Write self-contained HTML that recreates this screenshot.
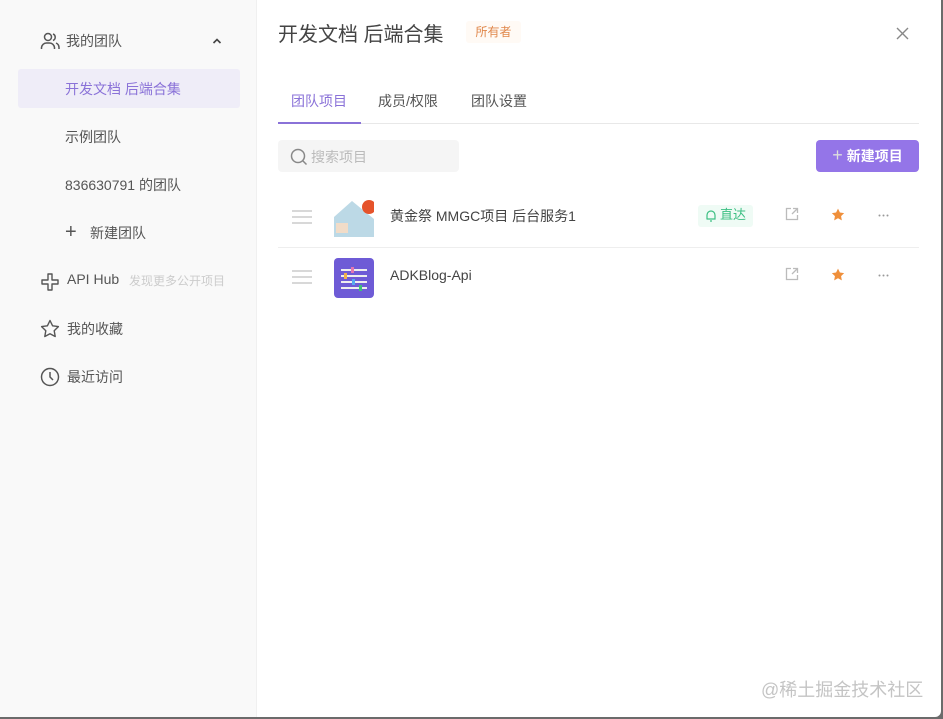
<!DOCTYPE html>
<html><head><meta charset="utf-8"><style>
*{margin:0;padding:0;box-sizing:border-box}
body{width:943px;height:719px;overflow:hidden;background:#6b6b6b;font-family:"Liberation Sans","Noto Sans CJK SC",sans-serif;position:relative}
.win{position:absolute;left:0;top:0;width:941px;height:717px;background:#fff;border-radius:0 0 6px 0;overflow:hidden}
.side{position:absolute;left:0;top:0;width:257px;height:717px;background:#f9f9f9;border-right:1px solid #f0f0f0}
.it{position:absolute;font-size:14px;color:#555;white-space:nowrap}
.sel{position:absolute;left:18px;top:69px;width:222px;height:39px;background:#efedf8;border-radius:3px}
svg{position:absolute}
</style></head><body><div class="win">
<div class="side">
<svg style="left:40px;top:32px" width="20" height="18" viewBox="0 0 20 18" fill="none" stroke="#555" stroke-width="1.5"><circle cx="8" cy="5" r="3.5"/><path d="M1.5 17v-1.5a5 5 0 0 1 5-4.5h3a5 5 0 0 1 5 4.5V17"/><path d="M13 2a3.5 3.5 0 0 1 0 6.5M16 11a5 5 0 0 1 3 4.5V17"/></svg>
<div class="it" style="left:66px;top:31px">我的团队</div>
<svg style="left:212px;top:37px" width="10" height="8" viewBox="0 0 10 8" fill="none" stroke="#444" stroke-width="1.6"><path d="M1.5 6l3.5-3.5 3.5 3.5"/></svg>
<div class="sel"></div>
<div class="it" style="left:65px;top:79px;color:#8a72d8">开发文档 后端合集</div>
<div class="it" style="left:65px;top:127px">示例团队</div>
<div class="it" style="left:65px;top:175px">836630791 的团队</div>
<div class="it" style="left:65px;top:221px;font-size:20px;font-weight:300">+</div>
<div class="it" style="left:90px;top:223px">新建团队</div>
<svg style="left:40px;top:272px" width="20" height="20" viewBox="0 0 20 20" fill="none" stroke="#555" stroke-width="1.4"><path d="M8 2h4v6h6v4h-6v6H8v-6H2V8h6z" stroke-linejoin="round"/></svg>
<div class="it" style="left:67px;top:271px">API Hub</div>
<div class="it" style="left:129px;top:272px;font-size:12px;color:#ccc">发现更多公开项目</div>
<svg style="left:40px;top:319px" width="20" height="19" viewBox="0 0 20 19" fill="none" stroke="#555" stroke-width="1.4"><path d="M10 1.5l2.6 5.3 5.8.8-4.2 4.1 1 5.8L10 14.8l-5.2 2.7 1-5.8L1.6 7.6l5.8-.8z" stroke-linejoin="round"/></svg>
<div class="it" style="left:67px;top:319px">我的收藏</div>
<svg style="left:40px;top:367px" width="20" height="20" viewBox="0 0 20 20" fill="none" stroke="#555" stroke-width="1.5"><circle cx="10" cy="10" r="8.5"/><path d="M10 5v5l3 3"/></svg>
<div class="it" style="left:67px;top:367px">最近访问</div>
</div>
<div class="it" style="left:278px;top:18px;font-size:20px;color:#444">开发文档 后端合集</div>
<div style="position:absolute;left:466px;top:21px;width:55px;height:22px;background:#fffaf5;border-radius:3px;font-size:12px;color:#e0874a;text-align:center;line-height:22px">所有者</div>
<svg style="left:896px;top:27px" width="13" height="13" viewBox="0 0 13 13" stroke="#888" stroke-width="1.4"><path d="M1 1l11 11M12 1L1 12"/></svg>
<div class="it" style="left:291px;top:91px;color:#8a72d8">团队项目</div>
<div class="it" style="left:378px;top:91px">成员/权限</div>
<div class="it" style="left:471px;top:91px">团队设置</div>
<div style="position:absolute;left:278px;top:123px;width:641px;height:1px;background:#e8e8e8"></div>
<div style="position:absolute;left:278px;top:122px;width:83px;height:2px;background:#8a72d8"></div>
<div style="position:absolute;left:278px;top:140px;width:181px;height:32px;background:#f5f5f5;border-radius:4px"></div>
<svg style="left:290px;top:148px" width="18" height="18" viewBox="0 0 18 18" fill="none" stroke="#888" stroke-width="1.5"><circle cx="8" cy="8" r="6.5"/><path d="M12.5 12.5l4 4"/></svg>
<div class="it" style="left:311px;top:147px;color:#bbb">搜索项目</div>
<div style="position:absolute;left:816px;top:140px;width:103px;height:32px;background:#9475e8;border-radius:4px;color:#fff;font-size:14px;font-weight:bold;line-height:30px;text-align:center"><span style="font-weight:300;font-size:18px;color:#ddd">+</span> 新建项目</div>
<div style="position:absolute;left:278px;top:247px;width:641px;height:1px;background:#eee"></div>
<svg style="left:292px;top:210px" width="20" height="14" stroke="#ccc" stroke-width="1.5"><path d="M0 1h20M0 7h20M0 13h20"/></svg>
<svg style="left:292px;top:270px" width="20" height="14" stroke="#ccc" stroke-width="1.5"><path d="M0 1h20M0 7h20M0 13h20"/></svg>
<svg style="left:334px;top:197px" width="40" height="40" viewBox="0 0 40 40"><path d="M0 20L18 4l22 18v18H0z" fill="#bcd9e6"/><circle cx="35" cy="10" r="7" fill="#e5532b"/><path d="M2 26h12v10H2z" fill="#f1dcc8"/></svg>
<svg style="left:334px;top:258px" width="40" height="40" viewBox="0 0 40 40"><rect width="40" height="40" rx="4" fill="#6e5bd6"/><g stroke="#eee" stroke-width="2"><path d="M7 12h26M7 18h26M7 24h26M7 30h26"/></g><rect x="17" y="9" width="3" height="6" fill="#e377b0"/><rect x="10" y="15" width="3" height="6" fill="#f0b24a"/><rect x="18" y="21" width="3" height="6" fill="#55aaf0"/><rect x="25" y="27" width="3" height="6" fill="#3cc07a"/></svg>
<div class="it" style="left:390px;top:206px;color:#444">黄金祭 MMGC项目 后台服务1</div>
<div class="it" style="left:390px;top:267px;color:#444">ADKBlog-Api</div>
<div style="position:absolute;left:698px;top:205px;width:55px;height:22px;background:#effbf5;border-radius:3px;color:#3cbf83;font-size:13px;line-height:20px;padding-left:22px">直达</div>
<svg style="left:705px;top:209px" width="12" height="14" viewBox="0 0 12 14" fill="none" stroke="#3cbf83" stroke-width="1.2"><path d="M2 10V6a4 4 0 0 1 8 0v4H1.5h9M5 12h2"/></svg>
<svg style="left:785px;top:207px" width="14" height="14" viewBox="0 0 14 14" fill="none" stroke="#bbb" stroke-width="1.3"><path d="M6 1.5H1.5v11h11V8M8 1.5h4.5V6M12.5 1.5L7 7"/></svg>
<svg style="left:785px;top:267px" width="14" height="14" viewBox="0 0 14 14" fill="none" stroke="#bbb" stroke-width="1.3"><path d="M6 1.5H1.5v11h11V8M8 1.5h4.5V6M12.5 1.5L7 7"/></svg>
<svg style="left:831px;top:208px" width="14" height="13" viewBox="0 0 20 19"><path d="M10 1l2.8 5.6 6.2.9-4.5 4.3 1.1 6.2L10 15l-5.6 3 1.1-6.2L1 7.5l6.2-.9z" fill="#ef8f3a"/></svg>
<svg style="left:831px;top:268px" width="14" height="13" viewBox="0 0 20 19"><path d="M10 1l2.8 5.6 6.2.9-4.5 4.3 1.1 6.2L10 15l-5.6 3 1.1-6.2L1 7.5l6.2-.9z" fill="#ef8f3a"/></svg>
<svg style="left:878px;top:214px" width="11" height="3" fill="#999"><circle cx="1.5" cy="1.5" r="1"/><circle cx="5.5" cy="1.5" r="1"/><circle cx="9.5" cy="1.5" r="1"/></svg>
<svg style="left:878px;top:274px" width="11" height="3" fill="#999"><circle cx="1.5" cy="1.5" r="1"/><circle cx="5.5" cy="1.5" r="1"/><circle cx="9.5" cy="1.5" r="1"/></svg>
<div class="it" style="left:761px;top:676px;font-size:18px;color:#c4c4c4">@稀土掘金技术社区</div>
</div></body></html>
